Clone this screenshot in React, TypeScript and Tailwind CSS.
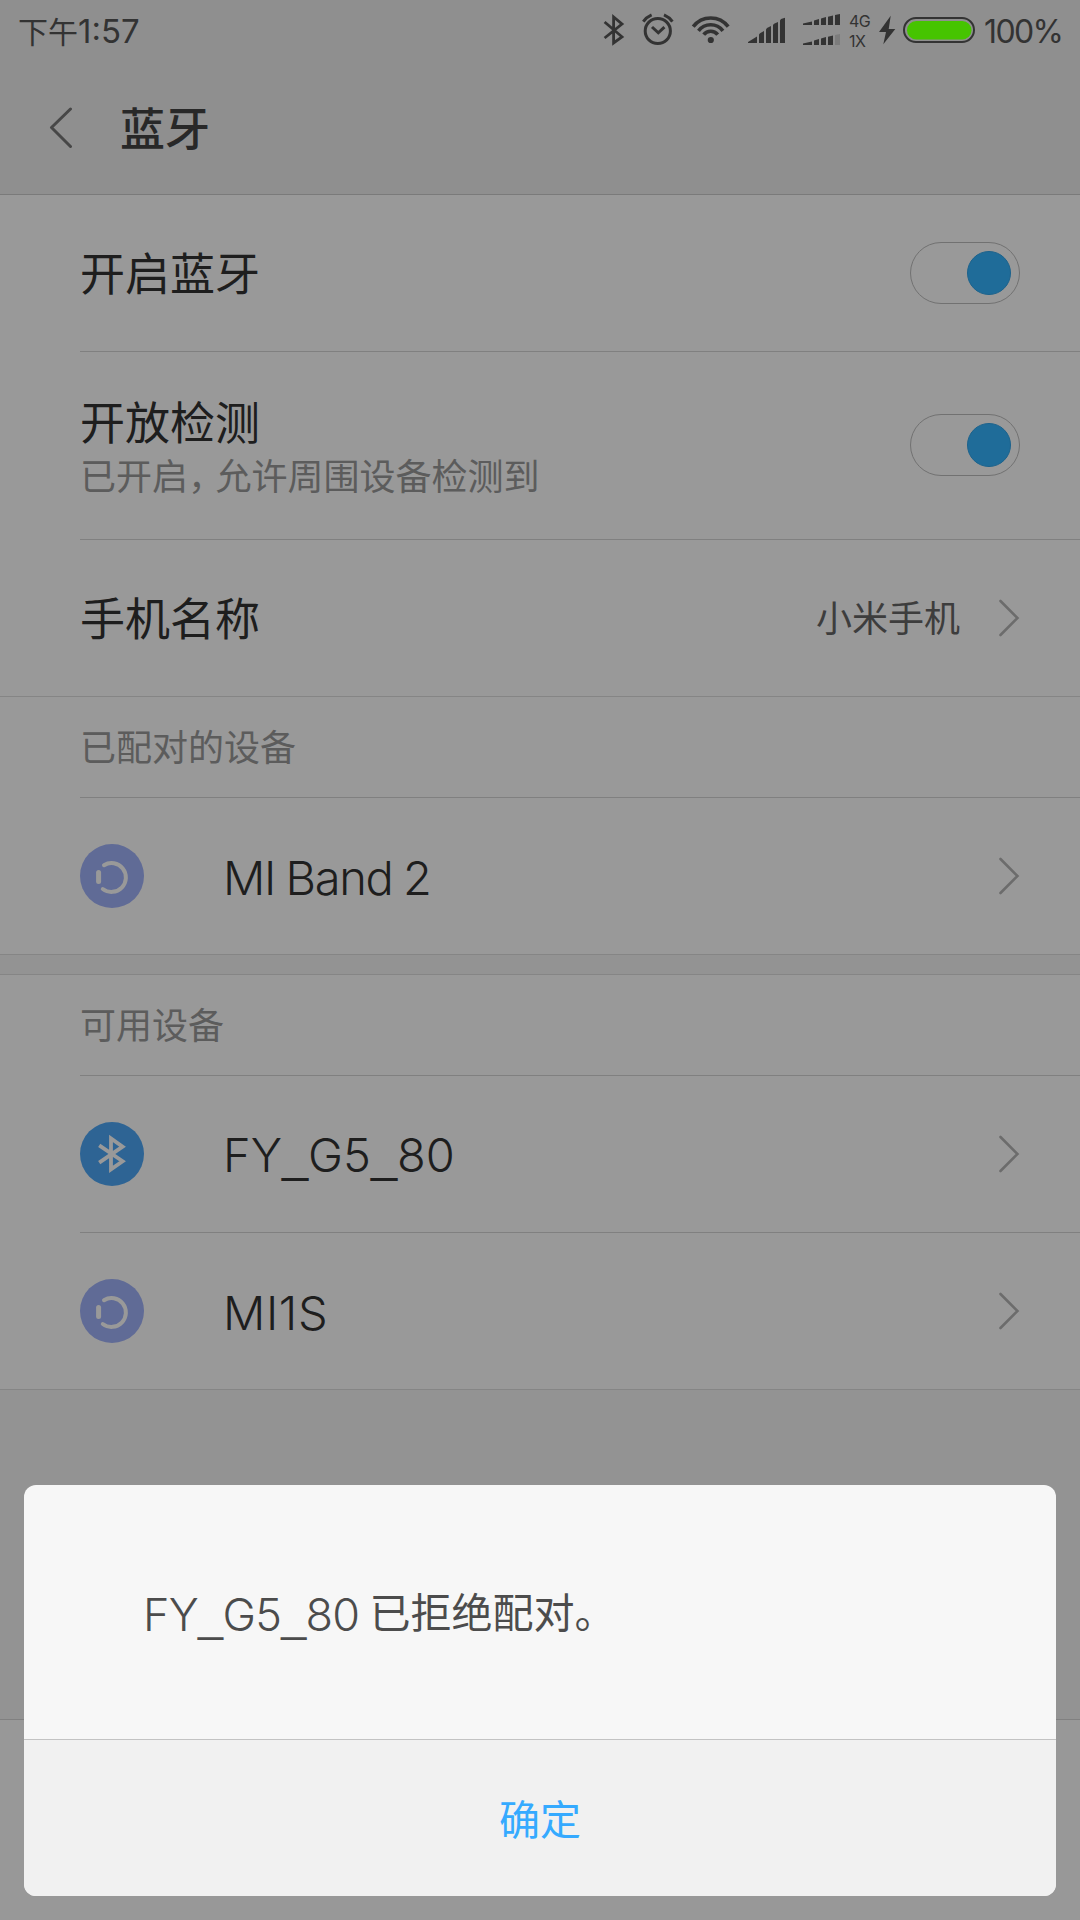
import { Fragment, useState, type ReactNode } from 'react';

type DeviceKind = 'band' | 'bluetooth';

interface Device {
  name: string;
  kind: DeviceKind;
  tracking: string;
}

const PAIRED: Device[] = [
  { name: 'MI Band 2', kind: 'band', tracking: 'tracking-[-1.3px] [word-spacing:-1.5px]' },
];

const AVAILABLE: Device[] = [
  { name: 'FY_G5_80', kind: 'bluetooth', tracking: 'tracking-normal' },
  { name: 'MI1S', kind: 'band', tracking: 'tracking-[0.6px]' },
];

function StatusBar() {
  return (
    <div className="relative z-20 flex h-[62px] items-center pr-[18px] pl-[18px] text-[#333333]">
      <span className="flex-1 text-[30px] leading-none whitespace-nowrap">
        下午<span className="text-[33px]">1:57</span>
      </span>

      {/* Bluetooth, alarm, wifi, signal */}
      <svg className="h-[62px] w-[245px] shrink-0" viewBox="600 0 245 62" fill="none" stroke="currentColor" strokeWidth="3">
        <path d="M604.6 22 L622 36.8 L613.6 43 V17 L622 24 L604.6 38" strokeWidth="2.8" />
        <circle cx="657.8" cy="31" r="12.6" />
        <path d="M652 27 L658.3 32.8 L664.4 27.2" />
        <path d="M643.3 21.6 Q646.5 17 651.6 14.8 M664 14.8 Q669.2 17 672.4 21.6" />
        <g strokeWidth="3.6">
          <path d="M693.2 26.6 A22 22 0 0 1 728.2 26.6" />
          <path d="M698.5 30.8 A15.3 15.3 0 0 1 722.9 30.8" />
          <path d="M703.7 34.7 A8.8 8.8 0 0 1 717.7 34.7" />
        </g>
        <g fill="currentColor" stroke="none">
          <circle cx="710.8" cy="40" r="3.1" />
          <path d="M748 43 V42 L757 36.6 V43z M759 43 V34.6 L760 33.2 L764 31 V43z M766 43 V29.4 L767 28 L771 26 V43z M773 43 V25 L774 23.8 L778 22 V43z M780 43 V20.5 L781 19 L785 17.7 V43z" />
          <path d="M803 25 V23.6 L812 21.5 V25z M814 25 V20.6 L819 19 V25z M821 25 V18.6 L826 17 V25z M828 25 V16.8 L833 15.4 V25z M835 25 V15 L840 14 V25z" />
          <path d="M803 45 V43.6 L812 41.5 V45z M814 45 V40.6 L819 39 V45z M821 45 V38.6 L826 37 V45z M828 45 V36.8 L833 35.4 V45z" />
          <path d="M835 45 V35 L840 34 V45z" fill="#7c7c7c" />
        </g>
      </svg>

      <div className="flex w-[30px] shrink-0 flex-col pl-1 text-[16px] leading-5 tracking-[-0.6px]">
        <span>4G</span>
        <span>1X</span>
      </div>

      {/* Charging bolt and battery */}
      <svg className="h-[62px] w-[109px] shrink-0" viewBox="875 0 109 62" fill="none">
        <path d="M890.7 15.7 L879 32 H886 L883.3 44.3 L895.3 29 H888.7z" fill="currentColor" />
        <rect x="904" y="18" width="70" height="24" rx="12" stroke="currentColor" strokeWidth="2" />
        <rect x="907" y="21" width="64.5" height="18.5" rx="9.2" fill="#46c400" />
      </svg>
      <span className="w-[78px] shrink-0 pt-px text-[32px] leading-none tracking-[-1.6px] whitespace-nowrap">100%</span>
    </div>
  );
}

function Chevron() {
  return (
    <svg className="h-[38px] w-[22px] shrink-0" viewBox="0 0 22 38" fill="none" stroke="#b5b5b5" strokeWidth="2.6" strokeLinecap="round">
      <path d="M2.5 2 L19.5 19 L2.5 36" />
    </svg>
  );
}

function Toggle({ on, onChange }: { on: boolean; onChange: () => void }) {
  return (
    <button
      role="switch"
      aria-checked={on}
      onClick={onChange}
      className={`mb-px flex h-[62px] w-[110px] shrink-0 items-center rounded-full border border-[#bdbdbd] px-2 ${on ? 'justify-end' : 'justify-start'}`}
    >
      <span className={`h-11 w-11 rounded-full border ${on ? 'border-[#2fa4ea] bg-[#35b4ff]' : 'border-gray-400 bg-white'}`} />
    </button>
  );
}

function Row({ children, last, tall }: { children: ReactNode; last?: boolean; tall?: boolean }) {
  return (
    <div className={last ? 'border-b border-[#dedede] pl-20' : 'pl-20'}>
      <div
        className={`flex items-center pr-[60px] ${tall ? 'h-[188px]' : last ? 'h-[156px]' : 'h-[157px]'} ${last ? '' : 'border-b border-[#d5d5d5]'}`}
      >
        {children}
      </div>
    </div>
  );
}

function SectionLabel({ children }: { children: ReactNode }) {
  return (
    <div className="pl-20">
      <div className="border-b border-[#d5d5d5] pt-[33px] pb-[30px] text-[36px] leading-[37px] text-[#999999]">{children}</div>
    </div>
  );
}

// Underscores take the wider glyph of the sans fallback
function DeviceName({ name }: { name: string }) {
  return name.split('_').map((part, i) => (
    <Fragment key={i}>
      {i > 0 && <span className="font-['Liberation_Sans',sans-serif]">_</span>}
      {part}
    </Fragment>
  ));
}

function DeviceIcon({ kind }: { kind: DeviceKind }) {
  if (kind === 'bluetooth') {
    return (
      <svg className="h-16 w-16 shrink-0" viewBox="0 0 64 64" fill="none">
        <circle cx="32" cy="32" r="32" fill="#4da7f7" />
        <path d="M19.2 23.4 L42.6 39.2 L31 47.4 V16.4 L42.6 24.6 L19.2 40.6" stroke="#fff" strokeWidth="3.8" />
      </svg>
    );
  }
  return (
    <svg className="h-16 w-16 shrink-0" viewBox="0 0 64 64" fill="none" stroke="#fff" strokeLinecap="round">
      <circle cx="32" cy="32" r="32" fill="#a0b2fa" stroke="none" />
      <path d="M18.6 28.6 V37.6" strokeWidth="5" />
      <path d="M24 21.2 A14.4 14.4 0 1 1 22.8 45" strokeWidth="4" />
    </svg>
  );
}

function DeviceRow({ device, last }: { device: Device; last?: boolean }) {
  return (
    <Row last={last}>
      <DeviceIcon kind={device.kind} />
      <span className={`flex-1 pt-0.5 pl-[79px] text-[47px] font-[350] text-[#333333] ${device.tracking}`}>
        <DeviceName name={device.name} />
      </span>
      <Chevron />
    </Row>
  );
}

export default function App() {
  const [enabled, setEnabled] = useState(true);
  const [visible, setVisible] = useState(true);
  const [open, setOpen] = useState(true);

  return (
    <div className="relative flex h-[1920px] w-[1080px] flex-col overflow-hidden bg-[#f6f6f6] font-['Inter','Noto_Sans_CJK_SC',sans-serif] leading-none font-normal">
      {/* Header */}
      <header className="h-[195px] border-b border-[#cccccc] bg-[#eeeeee]">
        <StatusBar />
        <div className="flex h-[132px] items-center pl-[49px]">
          <svg className="h-[42px] w-6" viewBox="0 0 24 42" fill="none" stroke="#777777" strokeWidth="3" strokeLinecap="round" strokeLinejoin="round">
            <path d="M21.5 2 L2.5 20.5 L21.5 39.5" />
          </svg>
          <h1 className="pt-[3px] pl-[47px] text-[45px] font-medium text-[#444444]">蓝牙</h1>
        </div>
      </header>

      {/* Settings */}
      <section className="bg-white">
        <Row>
          <span className="flex-1 pt-[3px] text-[45px] text-[#333333]">开启蓝牙</span>
          <Toggle on={enabled} onChange={() => setEnabled(!enabled)} />
        </Row>
        <Row tall>
          <div className="flex-1 pt-[5px]">
            <p className="text-[45px] text-[#333333]">开放检测</p>
            <p className="mt-[13px] text-[36px] text-[#999999]">
              已开启<span className="tracking-[-8.5px]">，</span>允许周围设备检测到
            </p>
          </div>
          <Toggle on={visible} onChange={() => setVisible(!visible)} />
        </Row>
        <Row last>
          <span className="flex-1 pt-[3px] text-[45px] text-[#333333]">手机名称</span>
          <span className="pt-0.5 pr-[38px] text-[36px] text-[#666666]">小米手机</span>
          <Chevron />
        </Row>
        <SectionLabel>已配对的设备</SectionLabel>
        {PAIRED.map((d, i) => (
          <DeviceRow key={d.name} device={d} last={i === PAIRED.length - 1} />
        ))}
      </section>

      {/* Section gap */}
      <div className="h-5 border-b border-[#dedede]" />

      <section className="bg-white">
        <SectionLabel>可用设备</SectionLabel>
        {AVAILABLE.map((d, i) => (
          <DeviceRow key={d.name} device={d} last={i === AVAILABLE.length - 1} />
        ))}
      </section>

      {/* Bottom action bar */}
      <div className="mt-auto h-[201px] border-t border-[#d5d5d5] bg-[#fdfdfd]" />

      {/* Dialog */}
      {open && (
        <div className="absolute inset-0 z-10 flex flex-col justify-end bg-black/40 p-6">
          <div role="dialog" className="overflow-hidden rounded-xl bg-[#f7f7f7]">
            <p className="flex h-[254px] items-center pt-[3px] pl-[119px] text-[41px] text-[#4c4c4c]">
              <span className="pt-0.5 pr-2.5 text-[45px] font-[350] tracking-[-0.7px]">
                <DeviceName name="FY_G5_80" />
              </span>
              已拒绝配对。
            </p>
            <button
              onClick={() => setOpen(false)}
              className="h-[157px] w-full border-t border-[#c3c3c3] bg-[#f1f1f1] pt-1 text-[41px] text-[#35aaff]"
            >
              确定
            </button>
          </div>
        </div>
      )}
    </div>
  );
}
